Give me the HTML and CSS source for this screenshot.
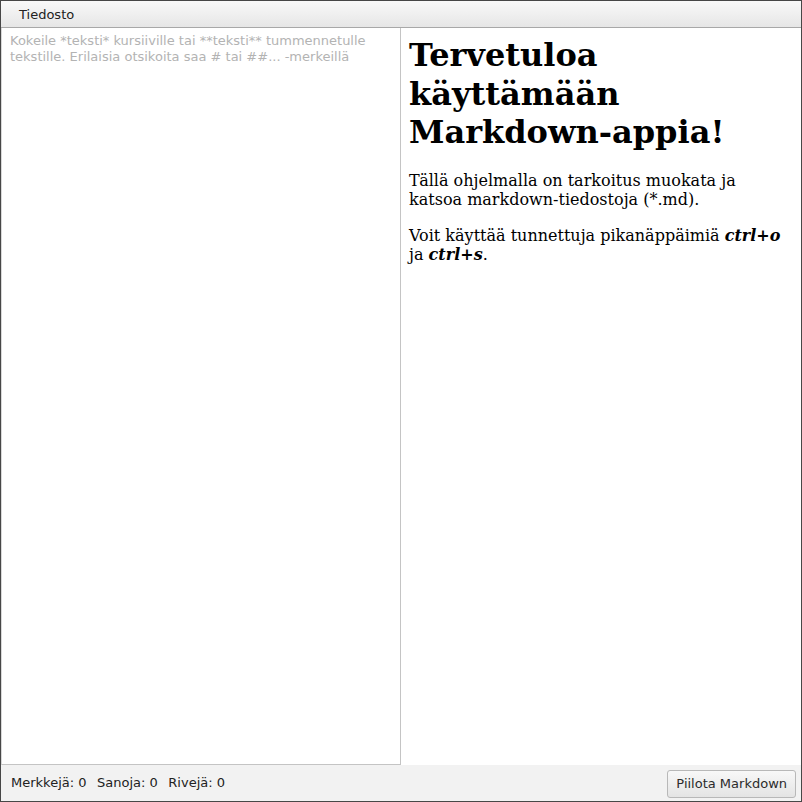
FILE: index.html
```html
<!DOCTYPE html>
<html lang="fi">
<head>
<meta charset="utf-8">
<title>Markdown</title>
<link rel="stylesheet" href="styles.css">
</head>
<body>
<div class="window">
  <div class="menubar"><span class="menu">Tiedosto</span></div>
  <div class="panes">
    <div class="editor"><div class="placeholder">Kokeile *teksti* kursiiville tai **teksti** tummennetulle tekstille. Erilaisia otsikoita saa # tai ##... -merkeillä</div></div>
    <div class="preview">
      <h1 class="title">Tervetuloa käyttämään Markdown-appia!</h1>
      <p class="para">Tällä ohjelmalla on tarkoitus muokata ja katsoa markdown-tiedostoja (*.md).</p>
      <p class="para">Voit käyttää tunnettuja pikanäppäimiä <b><i>ctrl+o</i></b> ja <b><i>ctrl+s</i></b>.</p>
    </div>
  </div>
  <div class="statusbar">
    <div class="stats"><span>Merkkejä: 0</span><span>Sanoja: 0</span><span>Rivejä: 0</span></div>
    <button class="btn">Piilota Markdown</button>
  </div>
</div>
</body>
</html>
```
FILE: styles.css
```css
html, body { margin: 0; padding: 0; }
body { width: 802px; height: 802px; overflow: hidden; background: #444; }
.window {
  box-sizing: border-box;
  width: 802px; height: 802px;
  border: 1px solid #474747;
  background: #f2f2f2;
  display: flex; flex-direction: column;
  font-family: "DejaVu Sans", sans-serif;
  font-size: 13px;
  color: #2b2b2b;
}
.menubar {
  height: 26px;
  flex: none;
  background: linear-gradient(#f9f9f9, #e6e6e6);
  border-bottom: 1px solid #a8a8a8;
  display: flex; align-items: center;
}
.menu { padding-left: 18px; color: #222; }
.panes {
  flex: 1;
  display: grid;
  grid-template-columns: 400px 1fr;
  background: #fff;
  min-height: 0;
}
.editor {
  border-right: 1px solid #c4c4c4;
  border-bottom: 1px solid #c4c4c4;
  border-left: 1px solid #d8d8d8;
  padding: 5px 8px 0 8px;
  background: #fff;
}
.placeholder { color: #b3b3b3; line-height: 16px; }
.preview {
  background: #fff;
  padding: 8px 8px 0 8px;
  font-family: "DejaVu Serif", serif;
  color: #000;
}
.title { font-size: 32px; font-weight: bold; margin: 0 0 19px 0; line-height: 38.5px; }
.para { font-size: 16px; margin: 0 0 17px 0; line-height: 19px; }
.statusbar {
  height: 36px; flex: none;
  display: flex; align-items: center; justify-content: space-between;
  padding: 0 5px 0 10px;
  background: #f2f2f2;
}
.stats { color: #222; display: flex; gap: 10.5px; margin-top: -1px; }
.btn {
  font-family: "DejaVu Sans", sans-serif;
  font-size: 13px;
  color: #2b2b2b;
  height: 28px;
  padding: 0 8px;
  border: 1px solid #b8b8b8;
  border-radius: 3px;
  background: linear-gradient(#f8f8f8, #e4e4e4);
  margin-top: 1px;
}
```
